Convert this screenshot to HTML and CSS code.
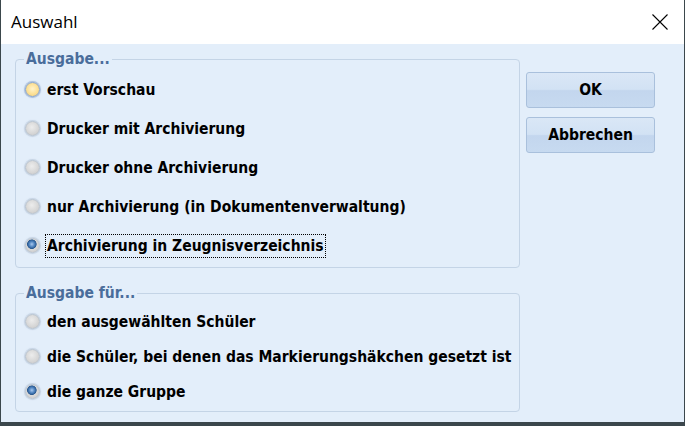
FILE: index.html
```html
<!DOCTYPE html>
<html lang="de">
<head>
<meta charset="utf-8">
<title>Auswahl</title>
<link rel="stylesheet" href="styles.css">
</head>
<body>
<div class="window">
  <div class="titlebar">
    <span class="title">Auswahl</span>
    <svg class="close" width="16" height="16" viewBox="0 0 16 16"><path d="M0.5 0.5 L15.5 15.5 M15.5 0.5 L0.5 15.5" stroke="#000" stroke-width="1.1" fill="none"/></svg>
  </div>
  <div class="content">
    <div class="groups">
      <fieldset class="group group-main">
        <legend>Ausgabe...</legend>
        <div class="opt"><span class="radio hover"></span><span class="label">erst Vorschau</span></div>
        <div class="opt"><span class="radio"></span><span class="label">Drucker mit Archivierung</span></div>
        <div class="opt"><span class="radio"></span><span class="label">Drucker ohne Archivierung</span></div>
        <div class="opt"><span class="radio"></span><span class="label">nur Archivierung (in Dokumentenverwaltung)</span></div>
        <div class="opt"><span class="radio checked"></span><span class="label focus">Archivierung in Zeugnisverzeichnis</span></div>
      </fieldset>
      <fieldset class="group group-for">
        <legend>Ausgabe für...</legend>
        <div class="opt"><span class="radio"></span><span class="label">den ausgewählten Schüler</span></div>
        <div class="opt"><span class="radio"></span><span class="label">die Schüler, bei denen das Markierungshäkchen gesetzt ist</span></div>
        <div class="opt"><span class="radio checked"></span><span class="label">die ganze Gruppe</span></div>
      </fieldset>
    </div>
    <div class="buttons">
      <button class="btn">OK</button>
      <button class="btn">Abbrechen</button>
    </div>
  </div>
</div>
</body>
</html>
```
FILE: styles.css
```css
html, body {
  margin: 0;
  padding: 0;
}
body {
  background: #3b474c;
  width: 685px;
  height: 426px;
  overflow: hidden;
}
.window {
  margin-left: 1px;
  width: 683px;
  height: 422px;
  display: flex;
  flex-direction: column;
  background: #e3eefa;
}
.titlebar {
  height: 44px;
  flex: none;
  background: #ffffff;
  display: flex;
  align-items: center;
  justify-content: space-between;
  padding: 0 16px 0 10px;
}
.title {
  font-family: "Open Sans", "Noto Sans", sans-serif;
  font-size: 17px;
  color: #000;
  margin-top: -1px;
}
.close {
  display: block;
  margin-top: -1px;
}
.content {
  flex: 1;
  display: flex;
  align-items: flex-start;
  padding: 6px 0 0 14px;
}
.groups {
  width: 505px;
  display: flex;
  flex-direction: column;
  gap: 16px;
}
.group {
  margin: 0;
  border: 1px solid #c4d4e6;
  border-radius: 4px;
  padding: 2px 0 2px 8px;
  min-width: 0;
}
legend {
  font-family: "DejaVu Sans Condensed", "DejaVu Sans", sans-serif;
  font-weight: bold;
  font-size: 15.5px;
  line-height: 18px;
  color: #4a6d9b;
  padding: 0 2px;
  margin-left: 0;
}
.opt {
  display: flex;
  align-items: center;
  height: 39px;
}
.group-for .opt {
  height: 35px;
}
.radio {
  flex: none;
  width: 13px;
  height: 13px;
  border-radius: 50%;
  border: 1px solid #b8c2cd;
  background: radial-gradient(circle at 45% 40%, #ececec 0%, #dadada 50%, #c6c6c6 100%);
  box-shadow: 0 0 1px 1px rgba(175, 190, 210, 0.6);
  margin-left: 1px;
  margin-right: 5px;
}
.radio.hover {
  border-color: #88a3c9;
  background: radial-gradient(circle at 50% 45%, #fff3cc 0%, #fde29a 50%, #f1cb74 100%);
  box-shadow: 0 0 1px 1px rgba(130, 158, 200, 0.65);
}
.radio.checked {
  background:
    radial-gradient(circle at 45% 40%, #a9c8ee 0%, #4f84c0 25%, #2a5990 42%, transparent 48%),
    radial-gradient(circle at 45% 40%, #ececec 0%, #dadada 50%, #c6c6c6 100%);
}
.label {
  font-family: "DejaVu Sans Condensed", "DejaVu Sans", sans-serif;
  font-weight: bold;
  font-size: 15.5px;
  line-height: 22px;
  color: #000;
  padding: 0 1px;
  border: 1px solid transparent;
}
.label.focus {
  border: 1px dotted #000;
}
.buttons {
  margin-left: 6px;
  padding-top: 22px;
  display: flex;
  flex-direction: column;
  gap: 9px;
}
.btn {
  width: 129px;
  height: 36px;
  border: 1px solid #a9c0dc;
  border-radius: 3px;
  background: linear-gradient(to bottom, #dae7f6 0%, #d2e2f4 48%, #c3d6ee 52%, #c7daf0 100%);
  font-family: "DejaVu Sans Condensed", "DejaVu Sans", sans-serif;
  font-weight: bold;
  font-size: 15.5px;
  color: #000;
  padding: 0;
}
```
